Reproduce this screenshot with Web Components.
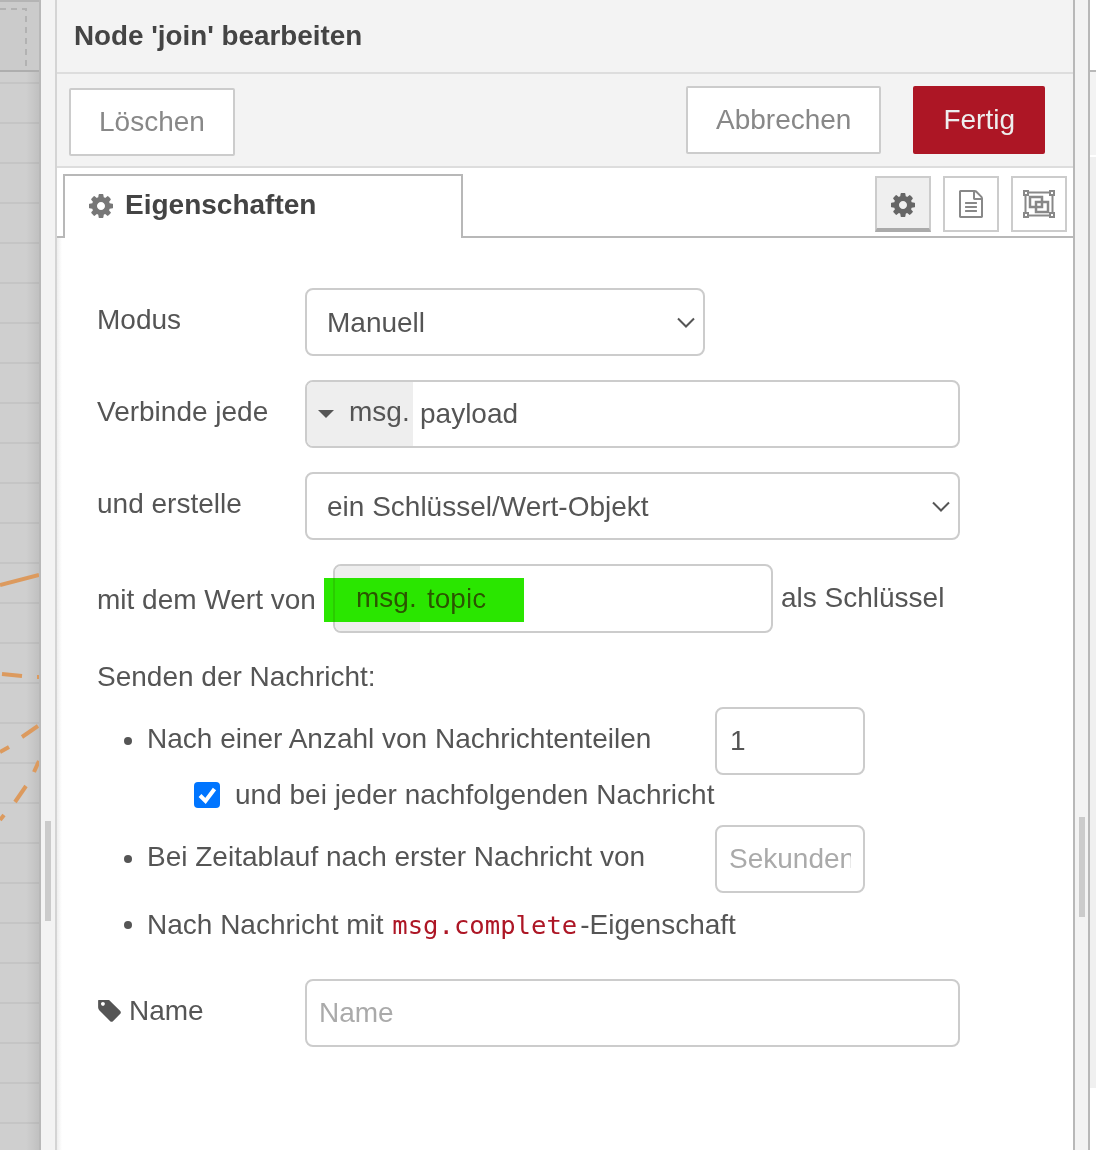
<!DOCTYPE html>
<html lang="de">
<head>
<meta charset="utf-8">
<title>Node 'join' bearbeiten</title>
<style>
	html, body { margin: 0; padding: 0; height: 100%; overflow: hidden; background: #f3f3f3; }
	body { font-family: "Liberation Sans", Arial, sans-serif; font-size: 28px; color: #555; }
</style>
</head>
<body>

<nr-editor>
	<nr-canvas></nr-canvas>
	<nr-gutter handle-top="821"></nr-gutter>
	<nr-tray title-text="Node 'join' bearbeiten">
		<nr-button slot="left" kind="plain" class="del">Löschen</nr-button>
		<nr-button slot="right" kind="plain">Abbrechen</nr-button>
		<nr-button slot="right" kind="primary">Fertig</nr-button>

		<nr-row label="Modus">
			<nr-select style="width:400px">Manuell</nr-select>
		</nr-row>
		<nr-row label="Verbinde jede">
			<nr-typed-input caret prefix="msg." style="width:655px">payload</nr-typed-input>
		</nr-row>
		<nr-row label="und erstelle">
			<nr-select style="width:655px">ein Schlüssel/Wert-Objekt</nr-select>
		</nr-row>
		<nr-key-row></nr-key-row>
		<nr-send-options></nr-send-options>
		<nr-row label="Name" icon="tag" class="name">
			<nr-input placeholder="Name" style="width:655px"></nr-input>
		</nr-row>
	</nr-tray>
	<nr-gutter handle-top="817" side="right"></nr-gutter>
	<nr-sidebar></nr-sidebar>
</nr-editor>

<script>
const ICONS = {
	cog: '<svg viewBox="128 128 1536 1536" width="100%" height="100%" fill="currentColor"><path d="M1152 896q0-106-75-181t-181-75-181 75-75 181 75 181 181 75 181-75 75-181zm512-109v222q0 12-8 23t-20 13l-185 28q-19 54-39 91 35 50 107 138 10 12 10 25t-9 23q-27 37-99 108t-94 71q-12 0-26-9l-138-108q-44 23-91 38-16 136-29 186-7 28-36 28h-222q-14 0-24.500-8.500t-11.500-21.500l-28-184q-49-16-90-37l-141 107q-10 9-25 9-14 0-25-11-126-114-165-168-7-10-7-23 0-12 8-23 15-21 51-66.500t54-70.500q-27-50-41-99l-183-27q-13-2-21-12.500t-8-23.500v-222q0-12 8-23t19-13l186-28q14-46 39-92-40-57-107-138-10-12-10-24 0-10 9-23 26-36 98.500-107.500t94.500-71.500q13 0 26 10l138 107q44-23 91-38 16-136 29-186 7-28 36-28h222q14 0 24.500 8.500t11.500 21.500l28 184q49 16 90 37l142-107q9-9 24-9 13 0 25 10 129 119 165 170 7 8 7 22 0 12-8 23-15 21-51 66.500t-54 70.500q26 50 41 98l183 28q13 2 21 12.500t8 23.500z"/></svg>',
	file: '<svg viewBox="128 0 1536 1792" width="100%" height="100%" fill="currentColor"><path d="M1596 380q28 28 48 76t20 88v1152q0 40-28 68t-68 28h-1344q-40 0-68-28t-28-68v-1600q0-40 28-68t68-28h896q40 0 88 20t76 48zm-444-244v376h376q-10-29-22-41l-313-313q-12-12-41-22zm384 1528v-1024h-416q-40 0-68-28t-28-68v-416h-768v1536h1280zm-1024-864q0-14 9-23t23-9h704q14 0 23 9t9 23v64q0 14-9 23t-23 9h-704q-14 0-23-9t-9-23v-64zm736 224q14 0 23 9t9 23v64q0 14-9 23t-23 9h-704q-14 0-23-9t-9-23v-64q0-14 9-23t23-9h704zm0 256q14 0 23 9t9 23v64q0 14-9 23t-23 9h-704q-14 0-23-9t-9-23v-64q0-14 9-23t23-9h704z"/></svg>',
	tag: '<svg viewBox="64 192 1579 1600" width="100%" height="100%" fill="currentColor"><path d="M576 448q0-53-37.500-90.500t-90.500-37.500-90.500 37.500-37.500 90.500 37.500 90.500 90.500 37.500 90.500-37.500 37.500-90.500zm1067 576q0 53-37 90l-491 492q-39 37-91 37-53 0-90-37l-715-716q-38-37-64.500-101t-26.500-117v-416q0-52 38-90t90-38h416q53 0 117 26.500t102 64.500l715 714q37 39 37 91z"/></svg>',
	group: '<svg viewBox="0 0 32 28" width="100%" height="100%" fill="none" stroke="currentColor" stroke-width="2.500"><rect x="2.500" y="2.500" width="27" height="23" stroke-width="2"/><g fill="#fff" stroke-width="2"><rect x="1" y="1" width="4" height="4"/><rect x="27" y="1" width="4" height="4"/><rect x="1" y="23" width="4" height="4"/><rect x="27" y="23" width="4" height="4"/></g><rect x="7" y="7" width="12" height="10"/><rect x="13" y="12" width="12" height="10"/></svg>'
};

class NrEditor extends HTMLElement {

	constructor() {
		super();
		this.attachShadow({ mode: 'open' });
		this.shadowRoot.innerHTML = `
			<style>
				:host { display: flex; width: 1096px; height: 1150px; overflow: hidden; }
			</style>
			<slot></slot>
		`;
	}

}

class NrCanvas extends HTMLElement {

	constructor() {
		super();
		this.attachShadow({ mode: 'open' });
		this.shadowRoot.innerHTML = `
			<style>
				:host {
					display: block;
					position: relative;
					flex: none;
					width: 39px;
					height: 1150px;
					border-right: 2px solid #b8b8b8;
					background:
						linear-gradient(to right, rgba(0,0,0,0) 26px, rgba(0,0,0,0.07) 39px),
						repeating-linear-gradient(to bottom, #c5c5c5 0, #c5c5c5 2px, #cfcfcf 2px, #cfcfcf 40px) 0 2px;
				}
				svg { position: absolute; left: 0; top: 0; }
			</style>
			<svg width="39" height="1150" fill="none">
				<rect x="0" y="0" width="39" height="72" fill="#cbcbcb"/>
				<rect x="0" y="0" width="39" height="2" fill="#b4b4b4"/>
				<rect x="0" y="70" width="39" height="2" fill="#aeaeae"/>
				<path d="M0 9H26V70" stroke="#b2b2b2" stroke-width="2" stroke-dasharray="6 5"/>
				<g stroke="#dc9a5e" stroke-width="4">
					<path d="M0 585L39 575"/>
					<path d="M2 674L22 676"/>
					<path d="M37 677L39 677"/>
					<path d="M22 737L38 726"/>
					<path d="M0 752L9 747"/>
					<path d="M34 772L39 761"/>
					<path d="M15 802L26 786"/>
					<path d="M0 820L4 815"/>
				</g>
			</svg>
		`;
	}

}

class NrGutter extends HTMLElement {

	constructor() {
		super();
		this.attachShadow({ mode: 'open' });
		const top = this.getAttribute('handle-top');
		const right = this.getAttribute('side') === 'right';
		this.shadowRoot.innerHTML = `
			<style>
				:host {
					display: block;
					flex: none;
					width: ${right ? 13 : 14}px;
					height: 1150px;
					padding-top: ${top}px;
					box-sizing: border-box;
					background: #f3f3f3;
				}
				div {
					width: 6px;
					height: 100px;
					margin-left: 4px;
					background: #cbcbcb;
				}
			</style>
			<div></div>
		`;
	}

}

class NrSidebar extends HTMLElement {

	constructor() {
		super();
		this.attachShadow({ mode: 'open' });
		this.shadowRoot.innerHTML = `
			<style>
				:host {
					display: block;
					flex: none;
					width: 6px;
					height: 1150px;
					border-left: 2px solid #b8b8b8;
					background: #fff;
				}
				.top { height: 70px; border-bottom: 2px solid #b8b8b8; }
				.bar { height: 83px; background: #f3f3f3; }
				.gap { height: 2px; }
				.rest { height: 931px; background: #f0f0f0; }
			</style>
			<div class="top"></div>
			<div class="bar"></div>
			<div class="gap"></div>
			<div class="rest"></div>
		`;
	}

}

class NrTray extends HTMLElement {

	constructor() {
		super();
		this.attachShadow({ mode: 'open' });
		this.shadowRoot.innerHTML = `
			<style>
				:host {
					display: flex;
					flex-direction: column;
					flex: none;
					width: 1020px;
					height: 1150px;
					box-sizing: border-box;
					border-left: 2px solid #d4d4d4;
					border-right: 2px solid #b8b8b8;
					background: #fff;
					position: relative;
				}
				:host::before {
					content: "";
					position: absolute;
					left: 0;
					top: 238px;
					bottom: 0;
					width: 5px;
					background: linear-gradient(to right, #eeeeee, #fff);
				}
				header {
					height: 72px;
					border-bottom: 2px solid #ddd;
					background: #f3f3f3;
					padding-left: 17px;
					line-height: 72px;
					font-size: 27.8px;
					font-weight: bold;
					color: #444;
				}
				.toolbar {
					display: flex;
					justify-content: space-between;
					height: 92px;
					border-bottom: 2px solid #ddd;
					background: #f3f3f3;
					padding: 0 28px 0 12px;
				}
				.toolbar div { display: flex; gap: 32px; padding-top: 12px; }
				.tabs {
					position: relative;
					display: flex;
					justify-content: space-between;
					box-sizing: border-box;
					height: 70px;
					border-bottom: 2px solid #b8b8b8;
					padding: 6px 6px 0 6px;
				}
				.form { position: relative; padding: 50px 0 0 40px; }
				.buttons { display: flex; gap: 12px; padding-top: 2px; }
			</style>
			<header>${this.getAttribute('title-text')}</header>
			<div class="toolbar">
				<div><slot name="left"></slot></div>
				<div><slot name="right"></slot></div>
			</div>
			<div class="tabs">
				<nr-tab icon="cog">Eigenschaften</nr-tab>
				<div class="buttons">
					<nr-icon-button icon="cog" selected></nr-icon-button>
					<nr-icon-button icon="file"></nr-icon-button>
					<nr-icon-button icon="group"></nr-icon-button>
				</div>
			</div>
			<div class="form"><slot></slot></div>
		`;
	}

}

class NrButton extends HTMLElement {

	constructor() {
		super();
		this.attachShadow({ mode: 'open' });
		const primary = this.getAttribute('kind') === 'primary';
		const shifted = this.classList.contains('del');
		this.shadowRoot.innerHTML = `
			<style>
				:host {
					display: flex;
					align-items: center;
					box-sizing: border-box;
					height: 68px;
					margin-top: ${shifted ? 2 : 0}px;
					padding: 0 28px;
					border: 2px solid ${primary ? '#ad1625' : '#ccc'};
					border-radius: 2px;
					background: ${primary ? '#ad1625' : '#fff'};
					color: ${primary ? '#eee' : '#888'};
				}
			</style>
			<slot></slot>
		`;
	}

}

class NrTab extends HTMLElement {

	constructor() {
		super();
		this.attachShadow({ mode: 'open' });
		this.shadowRoot.innerHTML = `
			<style>
				:host {
					display: flex;
					align-items: center;
					box-sizing: border-box;
					width: 400px;
					height: 64px;
					padding: 0 0 4px 24px;
					border: 2px solid #b8b8b8;
					border-bottom: none;
					background: #fff;
					font-weight: bold;
					color: #444;
				}
				span { display: block; width: 24px; height: 24px; margin-right: 12px; color: #777; }
			</style>
			<span>${ICONS[this.getAttribute('icon')]}</span>
			<slot></slot>
		`;
	}

}

class NrIconButton extends HTMLElement {

	constructor() {
		super();
		this.attachShadow({ mode: 'open' });
		const icon = this.getAttribute('icon');
		const selected = this.hasAttribute('selected');
		const size = { cog: 'width:24px;height:24px', file: 'width:24px;height:28px', group: 'width:32px;height:28px' }[icon];
		this.shadowRoot.innerHTML = `
			<style>
				:host {
					display: flex;
					align-items: center;
					justify-content: center;
					box-sizing: border-box;
					width: 56px;
					height: 56px;
					border: 2px solid #ccc;
					${selected ? 'border-bottom: 4px solid #aaa; padding-top: 2px;' : ''}
					background: ${selected ? '#efefef' : '#fff'};
					color: ${selected ? '#666' : '#888'};
				}
				span { display: block; ${size}; }
			</style>
			<span>${ICONS[icon]}</span>
		`;
	}

}

class NrRow extends HTMLElement {

	constructor() {
		super();
		this.attachShadow({ mode: 'open' });
		const icon = this.getAttribute('icon');
		const isName = this.classList.contains('name');
		this.shadowRoot.innerHTML = `
			<style>
				:host {
					display: flex;
					align-items: center;
					margin-bottom: 24px;
					margin-top: ${isName ? 37 : 0}px;
				}
				label {
					display: flex;
					align-items: center;
					flex: none;
					width: 208px;
					padding-bottom: 4px;
				}
				span { display: block; width: 24px; height: 24px; margin-right: 8px; }
			</style>
			<label>${icon ? `<span>${ICONS[icon]}</span>` : ''}${this.getAttribute('label')}</label>
			<slot></slot>
		`;
	}

}

class NrSelect extends HTMLElement {

	constructor() {
		super();
		this.attachShadow({ mode: 'open' });
		this.shadowRoot.innerHTML = `
			<style>
				:host {
					display: flex;
					align-items: center;
					justify-content: space-between;
					box-sizing: border-box;
					height: 68px;
					padding: 0 8px 0 20px;
					border: 2px solid #ccc;
					border-radius: 8px;
					background: #fff;
				}
				slot { display: block; padding-top: 2px; }
				svg { display: block; }
			</style>
			<slot></slot>
			<svg width="18" height="11" viewBox="0 0 18 11" fill="none" stroke="#555" stroke-width="2"><path d="M1 1.500L9 9.500L17 1.500"/></svg>
		`;
	}

}

class NrTypedInput extends HTMLElement {

	constructor() {
		super();
		this.attachShadow({ mode: 'open' });
		const caret = this.hasAttribute('caret');
		this.shadowRoot.innerHTML = `
			<style>
				:host {
					display: flex;
					flex: none;
					box-sizing: border-box;
					height: 68px;
					border: 2px solid #ccc;
					border-radius: 8px;
					background: #fff;
					overflow: hidden;
				}
				.type {
					display: flex;
					align-items: center;
					box-sizing: border-box;
					width: ${caret ? 106 : 85}px;
					padding: 0 0 ${caret ? 4 : 2}px ${caret ? 11 : 21}px;
					background: #eee;
				}
				i {
					display: block;
					width: 0;
					height: 0;
					margin: 4px 15px 0 0;
					border-left: 8px solid transparent;
					border-right: 8px solid transparent;
					border-top: 8px solid #555;
				}
				.value { display: flex; align-items: center; padding-left: 7px; }
			</style>
			<div class="type">${caret ? '<i></i>' : ''}<span>${this.getAttribute('prefix')}</span></div>
			<div class="value"><slot></slot></div>
		`;
	}

}

class NrInput extends HTMLElement {

	constructor() {
		super();
		this.attachShadow({ mode: 'open' });
		const placeholder = this.getAttribute('placeholder');
		this.shadowRoot.innerHTML = `
			<style>
				:host {
					display: block;
					flex: none;
					box-sizing: border-box;
					height: 68px;
					padding: 0 12px;
					border: 2px solid #ccc;
					border-radius: 8px;
					background: #fff;
				}
				div { height: 64px; line-height: 64px; overflow: hidden; white-space: nowrap; }
				.placeholder { color: #aaa; }
				.value { padding-left: 1px; }
			</style>
			<div class="${placeholder ? 'placeholder' : 'value'}">${placeholder || this.getAttribute('value')}</div>
		`;
	}

}

class NrKeyRow extends HTMLElement {

	constructor() {
		super();
		this.attachShadow({ mode: 'open' });
		this.shadowRoot.innerHTML = `
			<style>
				:host { display: flex; align-items: center; position: relative; height: 69px; }
				.label { flex: none; width: 236px; padding-top: 2px; }
				.after { margin-left: 8px; padding-bottom: 2px; }
				nr-typed-input { width: 440px; height: 69px; }
				.mark {
					position: absolute;
					left: 227px;
					top: 14px;
					width: 200px;
					height: 44px;
					background: #2ae600;
					mix-blend-mode: darken;
				}
			</style>
			<span class="label">mit dem Wert von</span>
			<nr-typed-input prefix="msg.">topic</nr-typed-input>
			<span class="after">als Schlüssel</span>
			<div class="mark"></div>
		`;
	}

}

class NrSendOptions extends HTMLElement {

	constructor() {
		super();
		this.attachShadow({ mode: 'open' });
		this.shadowRoot.innerHTML = `
			<style>
				:host { display: block; padding-top: 27px; }
				p { margin: 0 0 13px 0; height: 34px; line-height: 34px; }
				ul { margin: 0; padding: 0; list-style: none; }
				li {
					display: flex;
					align-items: center;
					min-height: 34px;
				}
				li::before {
					content: "";
					flex: none;
					width: 8px;
					height: 8px;
					margin: 0 15px 0 27px;
					border-radius: 50%;
					background: #555;
				}
				li span { flex: none; width: 568px; padding-bottom: 4px; }
				li.plain span { width: auto; padding-bottom: 0; }
				code {
					font-family: "DejaVu Sans Mono", "Liberation Mono", monospace;
					font-size: 25.6px;
					color: #ad1625;
					margin: 0 3px 0 1px;
				}
				nr-input { width: 150px; }
				.sub {
					display: flex;
					align-items: center;
					height: 30px;
					margin: 5px 0 15px 97px;
				}
				.check {
					display: block;
					width: 26px;
					height: 26px;
					margin-right: 15px;
					border-radius: 4px;
					background: #0075ff;
				}
				.check svg { display: block; }
				.second { margin-bottom: 15px; }
			</style>
			<p>Senden der Nachricht:</p>
			<ul>
				<li><span>Nach einer Anzahl von Nachrichtenteilen</span><nr-input value="1"></nr-input></li>
				<div class="sub">
					<div class="check"><svg width="26" height="26" viewBox="0 0 26 26" fill="none" stroke="#fff" stroke-width="4"><path d="M6 13.500L11.500 19L20.500 7"/></svg></div>
					und bei jeder nachfolgenden Nachricht
				</div>
				<li class="second"><span>Bei Zeitablauf nach erster Nachricht von</span><nr-input placeholder="Sekunden"></nr-input></li>
				<li class="plain"><span>Nach Nachricht mit <code>msg.complete</code>-Eigenschaft</span></li>
			</ul>
		`;
	}

}

customElements.define('nr-editor', NrEditor);
customElements.define('nr-canvas', NrCanvas);
customElements.define('nr-gutter', NrGutter);
customElements.define('nr-sidebar', NrSidebar);
customElements.define('nr-button', NrButton);
customElements.define('nr-tab', NrTab);
customElements.define('nr-icon-button', NrIconButton);
customElements.define('nr-tray', NrTray);
customElements.define('nr-row', NrRow);
customElements.define('nr-select', NrSelect);
customElements.define('nr-typed-input', NrTypedInput);
customElements.define('nr-input', NrInput);
customElements.define('nr-key-row', NrKeyRow);
customElements.define('nr-send-options', NrSendOptions);
</script>
</body>
</html>
